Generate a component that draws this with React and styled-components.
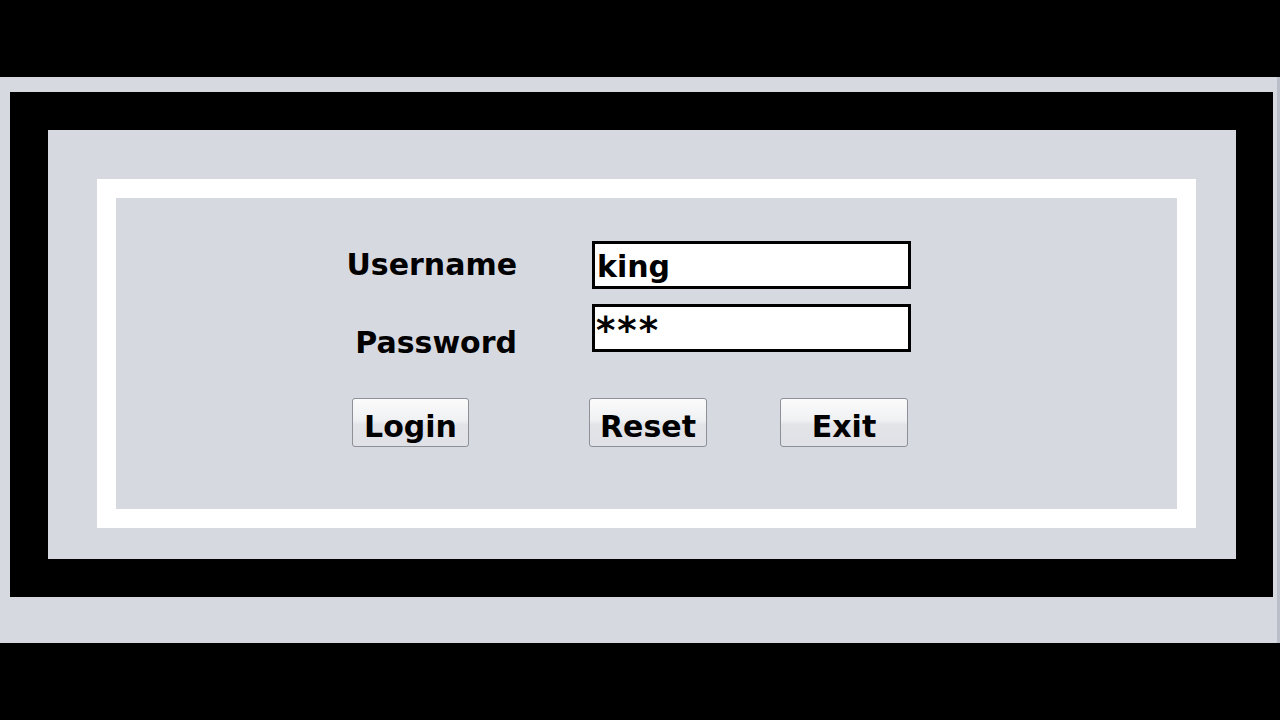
import React from "react";
import styled, { createGlobalStyle } from "styled-components";

const GlobalStyle = createGlobalStyle`
  html, body {
    margin: 0;
    padding: 0;
    background: #000000;
  }
  body {
    width: 1280px;
    height: 720px;
    overflow: hidden;
    font-family: "DejaVu Sans", Verdana, sans-serif;
  }
`;

const Screen = styled.div`
  width: 1280px;
  height: 720px;
  box-sizing: border-box;
  padding-top: 77px;
  background: #000000;
`;

const Window = styled.div`
  height: 566px;
  box-sizing: border-box;
  padding: 15px 4px 46px 10px;
  background: #d6d9e0;
  border-right: 3px solid #b9bec8;
`;

const BlackFrame = styled.div`
  height: 100%;
  box-sizing: border-box;
  padding: 38px 37px 38px 38px;
  background: #000000;
`;

const GrayFrame = styled.div`
  height: 100%;
  box-sizing: border-box;
  padding: 49px 40px 31px 49px;
  background: #d6d9e0;
`;

const WhiteFrame = styled.div`
  height: 100%;
  box-sizing: border-box;
  padding: 19px;
  background: #ffffff;
`;

const Panel = styled.div`
  height: 100%;
  box-sizing: border-box;
  padding: 43px 0 0 229px;
  background: #d6d9e0;
`;

const Form = styled.form`
  display: flex;
  flex-direction: column;
  margin: 0;
`;

const Row = styled.div`
  display: flex;
  align-items: flex-start;
  margin-bottom: ${(p) => p.$gap || 0}px;
`;

const Label = styled.label`
  width: 172px;
  margin-top: ${(p) => p.$offset}px;
  text-align: right;
  font-size: 30px;
  font-weight: bold;
  line-height: 36px;
  color: #000000;
  white-space: nowrap;
`;

const Field = styled.input`
  width: 319px;
  height: 48px;
  box-sizing: border-box;
  margin: 0 0 0 75px;
  padding: ${(p) => p.$pad || "3px 2px 0"};
  border: 3px solid #000000;
  border-radius: 0;
  outline: none;
  background: #ffffff;
  font-family: "DejaVu Sans", Verdana, sans-serif;
  font-size: ${(p) => p.$size || 30}px;
  font-weight: bold;
  line-height: 1;
  letter-spacing: ${(p) => p.$spacing || 0}px;
  color: #000000;
`;

const ButtonRow = styled.div`
  display: flex;
  margin-top: 37px;
  padding-left: 7px;
`;

const Button = styled.button`
  width: ${(p) => p.$width}px;
  height: 49px;
  box-sizing: border-box;
  margin: 0 0 0 ${(p) => p.$left || 0}px;
  padding: 8px 0 0;
  border: 1px solid #8d9097;
  border-radius: 3px;
  background: linear-gradient(#fbfbfc 0%, #f0f1f3 45%, #e2e4e8 55%, #dfe1e6 100%);
  font-family: "DejaVu Sans", Verdana, sans-serif;
  font-size: 30px;
  font-weight: bold;
  line-height: 39px;
  color: #000000;
  cursor: pointer;
`;

export default function App() {
  return (
    <>
      <GlobalStyle />
      <Screen>
        <Window>
          <BlackFrame>
            <GrayFrame>
              <WhiteFrame>
                <Panel>
                  <Form onSubmit={(e) => e.preventDefault()}>
                    <Row $gap={15}>
                      <Label $offset={6}>Username</Label>
                      <Field readOnly value="king" />
                    </Row>
                    <Row>
                      <Label $offset={21}>Password</Label>
                      <Field readOnly value="***" $size={37} $spacing={2} $pad="4px 2px 0 1px" />
                    </Row>
                    <ButtonRow>
                      <Button type="button" $width={117}>Login</Button>
                      <Button type="button" $width={118} $left={120}>Reset</Button>
                      <Button type="button" $width={128} $left={73}>Exit</Button>
                    </ButtonRow>
                  </Form>
                </Panel>
              </WhiteFrame>
            </GrayFrame>
          </BlackFrame>
        </Window>
      </Screen>
    </>
  );
}
